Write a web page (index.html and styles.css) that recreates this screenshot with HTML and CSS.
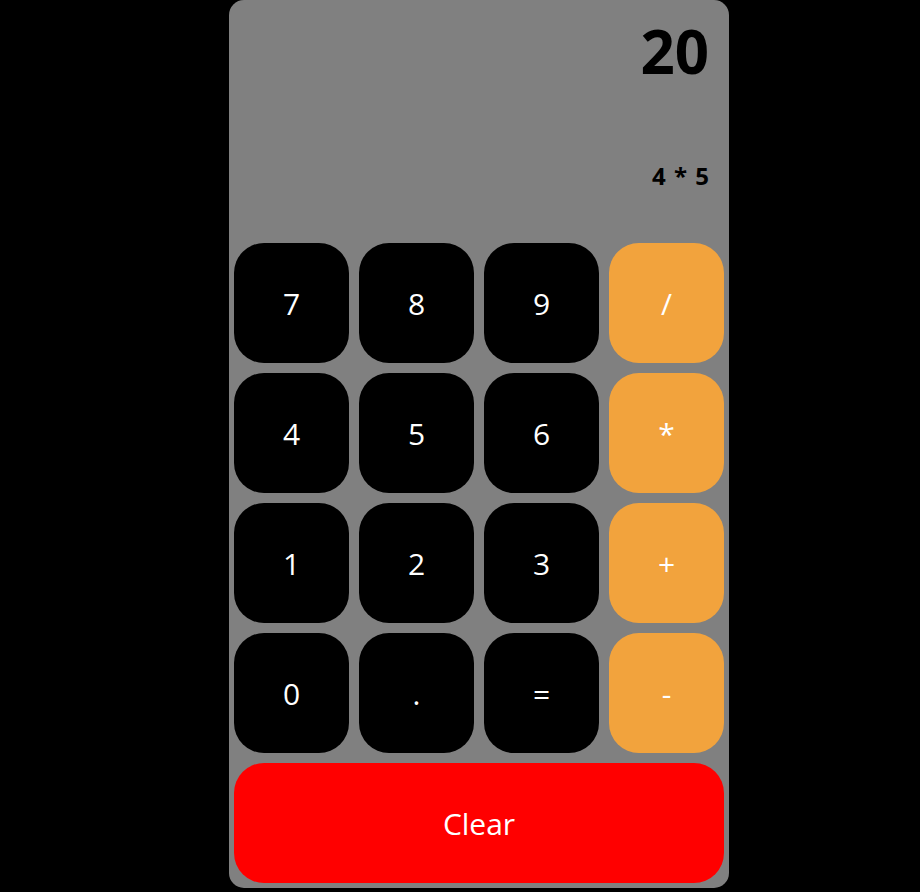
FILE: index.html
```
<!DOCTYPE html>
<html lang="en">
<head>
    <meta charset="utf-8"/>
    <title>Calculator</title>
    <link rel="stylesheet" href="styles.css">
</head>
<body>
<div class="calc">
    <div class="screen">
        <div class="result">20</div>
        <div class="expr">4 * 5</div>
    </div>
    <div class="keys">
        <button class="key">7</button>
        <button class="key">8</button>
        <button class="key">9</button>
        <button class="key op">/</button>
        <button class="key">4</button>
        <button class="key">5</button>
        <button class="key">6</button>
        <button class="key op">*</button>
        <button class="key">1</button>
        <button class="key">2</button>
        <button class="key">3</button>
        <button class="key op">+</button>
        <button class="key">0</button>
        <button class="key">.</button>
        <button class="key">=</button>
        <button class="key op">-</button>
        <button class="key clear">Clear</button>
    </div>
</div>
</body>
</html>
```
FILE: styles.css
```
* {
    padding: 0;
    margin: 0;
    box-sizing: border-box;
}
body {
    background: #000;
    font-family: "Open Sans", "Noto Sans", sans-serif;
}
.calc {
    width: 500px;
    height: 888px;
    margin-left: 229px;
    background: #808080;
    border-radius: 15px;
}
.screen {
    height: 238px;
    padding: 10px 20px 0 0;
    display: flex;
    flex-direction: column;
    align-items: flex-end;
}
.result {
    font-size: 60px;
    font-weight: bold;
    line-height: 82px;
    color: #000;
}
.expr {
    margin-top: 68px;
    font-size: 24px;
    font-weight: bold;
    line-height: 32px;
    word-spacing: 2px;
    color: #000;
}
.keys {
    display: grid;
    grid-template-columns: repeat(4, 115px);
    grid-auto-rows: 120px;
    gap: 10px;
    padding: 5px;
}
.key {
    border: none;
    border-radius: 30px;
    background: #000;
    color: #fff;
    font-family: inherit;
    font-size: 30px;
}
.key.op {
    background: #f2a33d;
}
.key.clear {
    grid-column: span 4;
    background: #ff0000;
}
```
